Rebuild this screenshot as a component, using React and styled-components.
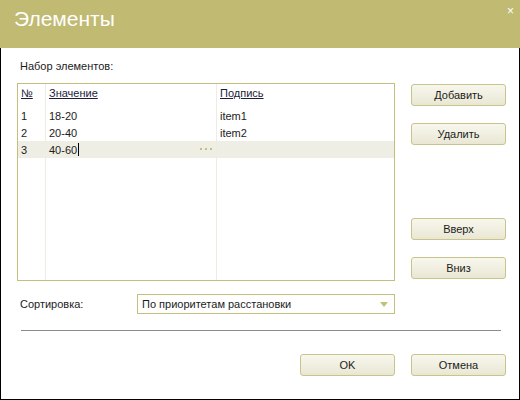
import React from "react";
import styled, { createGlobalStyle } from "styled-components";

const GlobalStyle = createGlobalStyle`
  html, body {
    margin: 0;
    padding: 0;
    background: #ffffff;
  }
  * {
    box-sizing: border-box;
  }
`;

const olive = "#c0ba72";
const lineColor = "#c5bf7d";
const textColor = "#1c1c1c";

const Window = styled.div`
  width: 520px;
  height: 400px;
  display: flex;
  flex-direction: column;
  font-family: "Liberation Sans", Arial, sans-serif;
  font-size: 11px;
  color: ${textColor};
  background: #fff;
`;

const TitleBar = styled.div`
  height: 48px;
  background: ${olive};
  display: flex;
  justify-content: space-between;
  align-items: flex-start;
  padding: 0 6px 0 14px;
`;

const Title = styled.div`
  font-size: 21px;
  color: #fff;
  line-height: 24px;
  margin-top: 7px;
`;

const CloseBtn = styled.div`
  color: #fff;
  font-size: 12px;
  line-height: 12px;
  margin-top: 5px;
  cursor: pointer;
`;

const Body = styled.div`
  flex: 1;
  border: 1px solid #000;
  border-top: none;
  padding: 11px 13px 0 16px;
  display: flex;
  flex-direction: column;
`;

const Label = styled.div`
  line-height: 14px;
  padding-left: 3px;
`;

const MainRow = styled.div`
  display: flex;
  gap: 16px;
  margin-top: 10px;
  height: 198px;
`;

const Table = styled.div`
  width: 378px;
  border: 1px solid ${lineColor};
  display: flex;
  flex-direction: column;
`;

const Row = styled.div`
  display: flex;
  height: ${(p) => p.$h}px;
  background: ${(p) => (p.$active ? "#efeee5" : "transparent")};
  flex: ${(p) => (p.$fill ? 1 : "none")};
  align-items: stretch;
`;

const Cell = styled.div`
  width: ${(p) => (p.$w ? `${p.$w}px` : "auto")};
  flex: ${(p) => (p.$w ? "none" : 1)};
  border-right: ${(p) => (p.$last ? "none" : "1px solid #eeede0")};
  padding-left: 3px;
  padding-top: ${(p) => (p.$head ? "3px" : "0")};
  display: flex;
  align-items: ${(p) => (p.$head ? "flex-start" : "center")};
  position: relative;
  white-space: nowrap;
`;

const HeadText = styled.span`
  text-decoration: underline;
  color: #1b1b3a;
`;

const Caret = styled.span`
  display: inline-block;
  width: 1px;
  height: 13px;
  background: #000;
  margin-left: 1px;
`;

const Dots = styled.div`
  position: absolute;
  right: 4px;
  top: 7px;
  display: flex;
  gap: 3px;
  span {
    width: 2px;
    height: 2px;
    background: #c5bf7d;
  }
`;

const SideButtons = styled.div`
  width: 95px;
  display: flex;
  flex-direction: column;
  padding: 1px 0 2px;
  gap: 17px;
`;

const Spacer = styled.div`
  flex: 1;
`;

const Button = styled.button`
  width: 95px;
  height: 22px;
  border: 1px solid #c9c38c;
  border-radius: 3px;
  background: linear-gradient(#f8f7ee, #e9e7d3);
  font-family: "Liberation Sans", Arial, sans-serif;
  font-size: 11px;
  color: ${textColor};
  padding: 0;
  cursor: pointer;
`;

const SortRow = styled.div`
  display: flex;
  align-items: center;
  margin-top: 13px;
  height: 20px;
`;

const SortLabel = styled.div`
  width: 120px;
  padding-left: 3px;
`;

const Select = styled.div`
  width: 258px;
  height: 20px;
  border: 1px solid ${lineColor};
  display: flex;
  align-items: center;
  justify-content: space-between;
  padding: 0 6px 0 4px;
  font-size: 11px;
`;

const Separator = styled.div`
  margin: 16px 0 0 4px;
  width: 480px;
  height: 1px;
  background: #8c8c8c;
`;

const Footer = styled.div`
  display: flex;
  justify-content: flex-end;
  gap: 16px;
  margin-top: 23px;
`;

const rows = [
  { n: "1", value: "18-20", caption: "item1" },
  { n: "2", value: "20-40", caption: "item2" },
  { n: "3", value: "40-60", caption: "", active: true },
];

const Arrow = () => (
  <svg width="8" height="5" viewBox="0 0 8 5">
    <path d="M0 0 H8 L4 5 Z" fill="#c5bf7d" />
  </svg>
);

export default function App() {
  return (
    <>
      <GlobalStyle />
      <Window>
        <TitleBar>
          <Title>Элементы</Title>
          <CloseBtn>×</CloseBtn>
        </TitleBar>
        <Body>
          <Label>Набор элементов:</Label>
          <MainRow>
            <Table>
              <Row $h={23}>
                <Cell $w={28} $head>
                  <HeadText>№</HeadText>
                </Cell>
                <Cell $w={171} $head>
                  <HeadText>Значение</HeadText>
                </Cell>
                <Cell $last $head>
                  <HeadText>Подпись</HeadText>
                </Cell>
              </Row>
              {rows.map((r) => (
                <Row key={r.n} $h={17} $active={r.active}>
                  <Cell $w={28}>{r.n}</Cell>
                  <Cell $w={171}>
                    {r.value}
                    {r.active && <Caret />}
                    {r.active && (
                      <Dots>
                        <span />
                        <span />
                        <span />
                      </Dots>
                    )}
                  </Cell>
                  <Cell $last>{r.caption}</Cell>
                </Row>
              ))}
              <Row $fill>
                <Cell $w={28} />
                <Cell $w={171} />
                <Cell $last />
              </Row>
            </Table>
            <SideButtons>
              <Button>Добавить</Button>
              <Button>Удалить</Button>
              <Spacer />
              <Button>Вверх</Button>
              <Button>Вниз</Button>
            </SideButtons>
          </MainRow>
          <SortRow>
            <SortLabel>Сортировка:</SortLabel>
            <Select>
              <span>По приоритетам расстановки</span>
              <Arrow />
            </Select>
          </SortRow>
          <Separator />
          <Footer>
            <Button>OK</Button>
            <Button>Отмена</Button>
          </Footer>
        </Body>
      </Window>
    </>
  );
}
